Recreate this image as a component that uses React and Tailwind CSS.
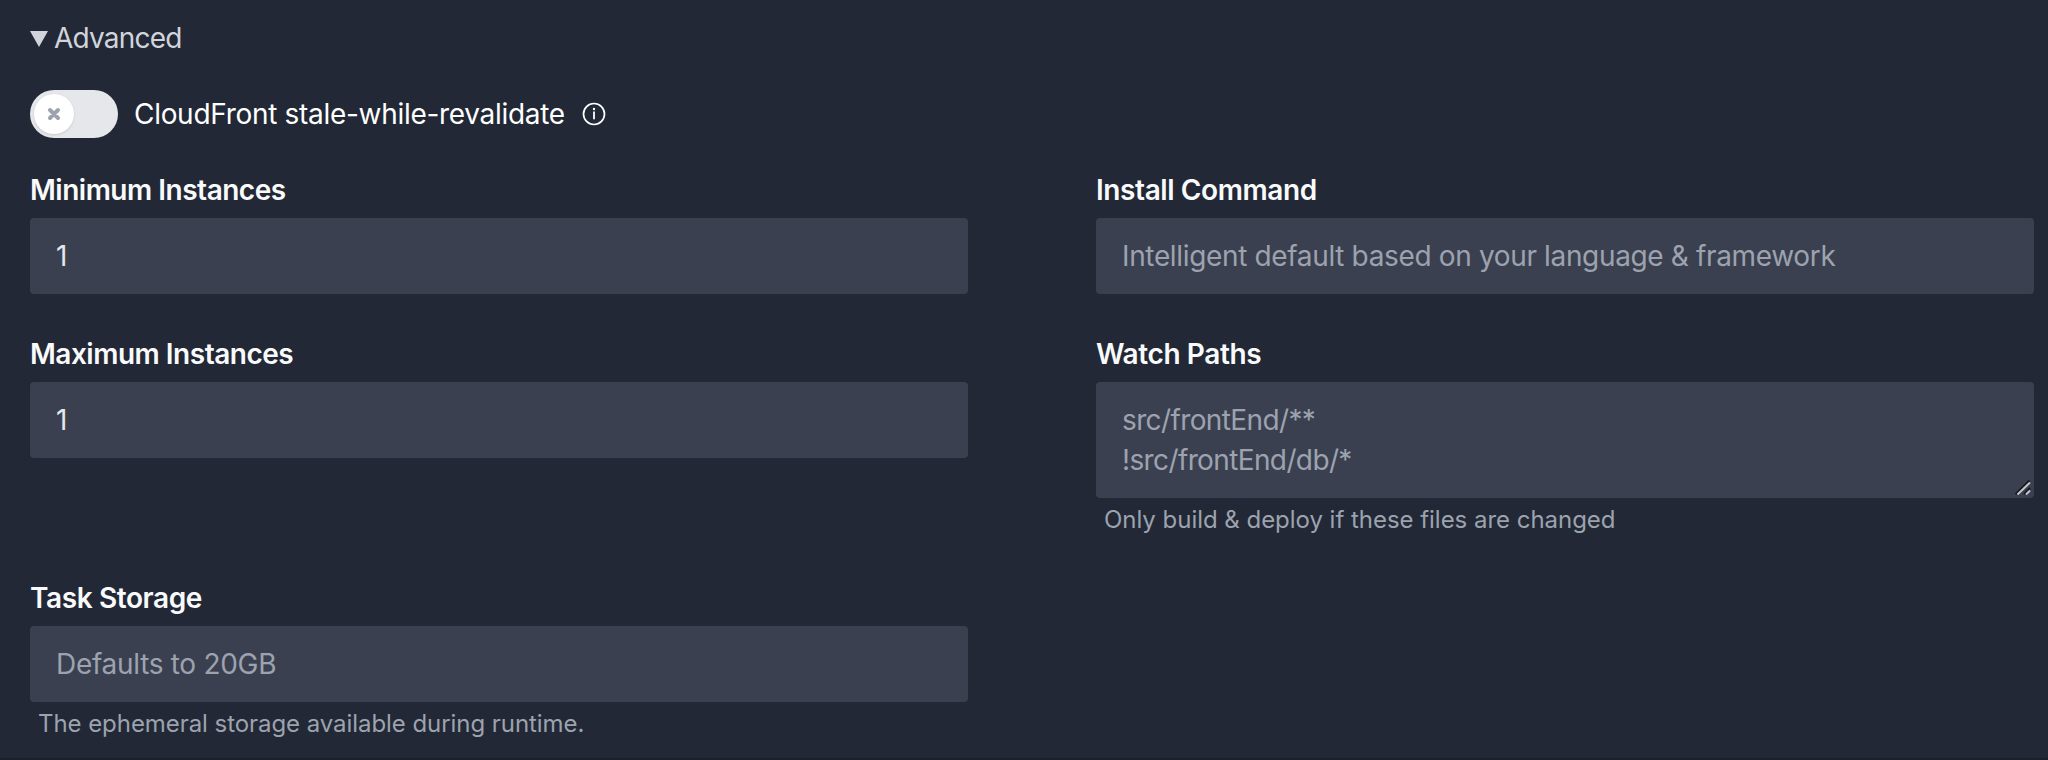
const inputClass =
  "block w-full h-[76px] rounded-[4px] bg-[#3b4050] px-[26px] text-[28px] leading-10 text-[#e5e7eb] placeholder:text-[#9ca3af] placeholder:opacity-100 outline-none";

function Field({ label, labelClass, help, helpClass, children }) {
  return (
    <div>
      <label className="mb-2 block h-10 text-[28px] leading-10 font-semibold text-[#f9fafb]">
        <span className={labelClass}>{label}</span>
      </label>
      {children}
      {help && (
        <p className="mt-1 pl-2 text-[24px] leading-9 text-[#9ca3af]">
          <span className={helpClass}>{help}</span>
        </p>
      )}
    </div>
  );
}

function Toggle() {
  return (
    <button
      type="button"
      role="switch"
      aria-checked="false"
      className="flex h-12 w-[88px] items-center rounded-full bg-[#e5e7eb] p-1"
    >
      <span className="flex size-10 items-center justify-center rounded-full bg-white shadow-sm">
        <svg viewBox="0 0 12 12" fill="none" className="size-6 text-[#9ca3af]">
          <path
            d="M4 8l2-2m0 0l2-2M6 6L4 4m2 2l2 2"
            stroke="currentColor"
            strokeWidth="2"
            strokeLinecap="round"
            strokeLinejoin="round"
          />
        </svg>
      </span>
    </button>
  );
}

function InfoIcon() {
  return (
    <svg viewBox="0 0 24 24" className="size-6" fill="none" stroke="#ffffff">
      <circle cx="12" cy="12" r="10.5" strokeWidth="1.7" />
      <path d="M12 9.6v7.6" strokeWidth="1.8" />
      <circle cx="12" cy="7" r="1.2" fill="#ffffff" stroke="none" />
    </svg>
  );
}

export default function App() {
  return (
    <main className="h-[760px] w-[2048px] overflow-hidden border-b-2 border-[#1b202b] bg-[#222835] pl-[30px] pr-[14px] pt-[18px] font-[Inter,'Liberation_Sans',sans-serif]">
      <div className="flex h-10 items-center gap-[6px] text-[28px] leading-10 text-[#d1d5db]">
        <svg viewBox="0 0 18 16" className="mt-px h-4 w-[18px]" fill="currentColor">
          <path d="M0 0h18L9 16z" />
        </svg>
        <span className="tracking-[-0.8px]">Advanced</span>
      </div>

      <div className="mt-8 flex h-12 items-center">
        <Toggle />
        <span className="ml-4 text-[28px] leading-10 tracking-[-0.3px] text-white">
          CloudFront stale-while-revalidate
        </span>
        <span className="ml-[17px]">
          <InfoIcon />
        </span>
      </div>

      <div className="mt-8 grid grid-cols-2 gap-x-32">
        <div className="h-[164px]">
          <Field label="Minimum Instances" labelClass="tracking-[-0.49px]">
            <input className={inputClass} defaultValue="1" />
          </Field>
        </div>
        <div className="h-[164px]">
          <Field label="Install Command" labelClass="tracking-[-0.41px]">
            <input
              className={`${inputClass} tracking-[-0.35px]`}
              placeholder="Intelligent default based on your language & framework"
            />
          </Field>
        </div>
        <div className="h-[244px]">
          <Field label="Maximum Instances" labelClass="tracking-[-0.49px]">
            <input className={inputClass} defaultValue="1" />
          </Field>
        </div>
        <div className="h-[244px]">
          <Field
            label="Watch Paths"
            labelClass="tracking-[-0.4px]"
            help="Only build & deploy if these files are changed"
            helpClass="tracking-[-0.03px]"
          >
            <div className="relative">
              <textarea
                className="block h-[116px] w-full resize-none overflow-hidden rounded-[4px] bg-[#3b4050] px-[26px] py-[18px] text-[28px] leading-10 tracking-[-0.62px] outline-none placeholder:text-[#9ca3af] placeholder:opacity-100"
                placeholder={"src/frontEnd/**\n!src/frontEnd/db/*"}
              />
              <svg viewBox="0 0 16 16" className="absolute right-[3px] bottom-[3px] size-4" fill="none">
                <path d="M0.5 15L14.5 1.5M9 15l6-6" stroke="#14171c" strokeWidth="1.8" />
                <path d="M2.5 15.5L15 3.5M11 15.5l4-4" stroke="#c4c6cc" strokeWidth="2" />
              </svg>
            </div>
          </Field>
        </div>
        <Field
          label="Task Storage"
          labelClass="tracking-[-0.4px]"
          help="The ephemeral storage available during runtime."
          helpClass="tracking-[-0.06px]"
        >
          <input className={`${inputClass} tracking-[-0.3px]`} placeholder="Defaults to 20GB" />
        </Field>
      </div>
    </main>
  );
}
